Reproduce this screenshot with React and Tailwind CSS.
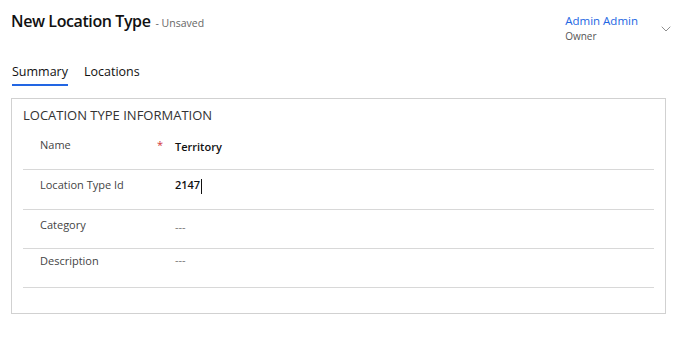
import { ChevronDown } from 'lucide-react'

const fields = [
    { label: 'Name', value: 'Territory', required: true, strong: true, h: 'h-[40px]', lp: 'pt-[7px]', vp: 'pt-[9px]' },
    { label: 'Location Type Id', value: '2147', strong: true, cursor: true, h: 'h-[40px]', lp: 'pt-[7px]', vp: 'pt-[7px]' },
    { label: 'Category', value: '---', h: 'h-[39px]', lp: 'pt-[7px]', vp: 'pt-[9px]' },
    { label: 'Description', value: '---', h: 'h-[39px]', lp: 'pt-[4px]', vp: 'pt-[3px]' },
]

export default function App() {
    return (
        <div className="w-[686px] h-[337px] bg-white text-[#333] font-['Segoe_UI','Open_Sans',sans-serif] overflow-hidden">
            {/* ── Header ── */}
            <div className="flex items-start justify-between pl-[11px] pr-[12px] pt-[9px]">
                <div className="flex items-baseline gap-[5px]">
                    <h1 className="text-[16px] font-semibold text-[#111] tracking-[-0.4px]">New Location Type</h1>
                    <span className="text-[10.5px] text-[#666]">- Unsaved</span>
                </div>
                <div className="flex items-start">
                    <div className="flex flex-col pt-[4px]">
                        <span className="text-[11.5px] leading-[16px] text-[#2266e3]">Admin Admin</span>
                        <span className="text-[10px] leading-[14px] text-[#555]">Owner</span>
                    </div>
                    <ChevronDown className="ml-[20px] mt-[12px] text-[#555]" size={16} strokeWidth={1} />
                </div>
            </div>

            {/* ── Tabs ── */}
            <div className="flex gap-[16px] pl-[12px] mt-[20px] text-[12.5px]">
                <div className="border-b-2 border-[#2266e3] pb-[2px] text-[#111]">Summary</div>
                <div className="text-[#111]">Locations</div>
            </div>

            {/* ── Section ── */}
            <section className="mt-[12px] ml-[11px] w-[655px] h-[216px] border border-[#d1d1d1]">
                <h2 className="pl-[11px] pt-[7px] text-[13px] text-[#333] uppercase">Location Type Information</h2>
                <div className="mx-[11px] mt-[5px]">
                    {fields.map((f) => (
                        <div key={f.label} className={`${f.h} flex border-b border-[#d8d8d8]`}>
                            <div className={`w-[134px] pl-[17px] text-[11px] text-[#444] ${f.lp}`}>
                                {f.label}
                            </div>
                            <div className={`w-[18px] text-[#d13438] text-[11px] ${f.lp}`}>{f.required ? '*' : ''}</div>
                            <div className={`text-[11px] ${f.vp} ${f.strong ? 'font-semibold text-[#111]' : 'text-[#777]'}`}>
                                {f.value}
                                {f.cursor && <span className="inline-block w-px h-[15px] bg-[#111] align-middle ml-[1px]" />}
                            </div>
                        </div>
                    ))}
                </div>
            </section>
        </div>
    )
}
